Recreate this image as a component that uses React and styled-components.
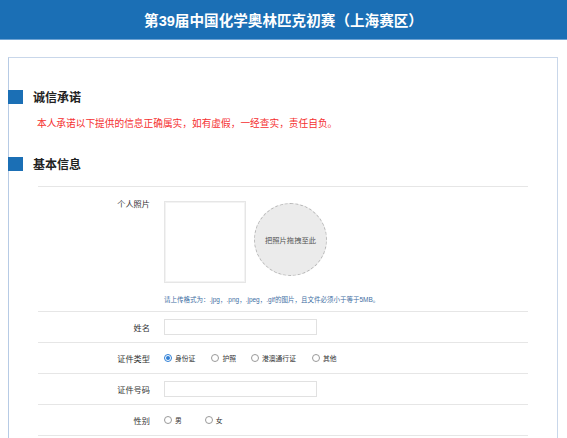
import React from "react"
import styled, { createGlobalStyle } from "styled-components"

const GlobalStyle = createGlobalStyle`
  html, body {
    margin: 0;
    padding: 0;
    background: #fff;
    font-family: "Liberation Sans", "Noto Sans CJK SC", sans-serif;
    color: #333;
  }
`

const Header = styled.header`
  height: 39px;
  background: #1b6fb5;
  border-bottom: 1px solid #6fa3d3;
  display: flex;
  align-items: center;
  justify-content: center;
  color: #fff;
  font-size: 14.6px;
  font-weight: bold;
`

const Panel = styled.div`
  margin: 17px 9px 0 8px;
  border: 1px solid #c9d7ea;
  border-left: 1px solid #b7cbe5;
  border-bottom: none;
  padding-top: 31px;
  min-height: 400px;
`

const SectionTitle = styled.div`
  display: flex;
  align-items: center;
  height: 15px;
  margin-top: ${p => p.top || 0}px;
  font-size: 12px;
  font-weight: bold;
  color: #222;
`

const Square = styled.span`
  width: 15px;
  height: 14px;
  margin-left: -1px;
  background: #1b6fb5;
  margin-right: 10px;
`

const Promise = styled.div`
  margin: 13px 0 0 28px;
  font-size: 9.7px;
  line-height: 14px;
  color: #f53030;
`

const Form = styled.div`
  margin: 15px 0 0 29px;
  width: 490px;
  border-top: 1px solid #e6e6e6;
`

const Row = styled.div`
  display: grid;
  grid-template-columns: 112px 1fr;
  column-gap: 14px;
  align-items: ${p => (p.top ? "start" : "center")};
  min-height: 31px;
  padding: ${p => (p.top ? "14px 0 7px" : "0")};
  border-bottom: 1px solid #e6e6e6;
  box-sizing: border-box;
`

const Label = styled.div`
  text-align: right;
  font-size: 8.2px;
  color: #333;
  margin-top: ${p => (p.top ? "-4px" : "0")};
`

const PhotoWrap = styled.div`
  display: flex;
  align-items: flex-start;
`

const PhotoBox = styled.div`
  width: 80px;
  height: 80px;
  border: 1px solid #e6e6e6;
  box-shadow: inset 0 0 0 1px #f3f3f3;
`

const DropCircle = styled.div`
  width: 71px;
  height: 71px;
  margin: 2px 0 0 8px;
  border-radius: 50%;
  border: 1px dashed #b8b8b8;
  background: #ebebeb;
  display: flex;
  align-items: center;
  justify-content: center;
  font-size: 7.3px;
  color: #555;
`

const Hint = styled.div`
  margin-top: 11px;
  font-size: 6.5px;
  color: #3f6fa4;
`

const TextInput = styled.div`
  width: 151px;
  height: 14px;
  border: 1px solid #e1e1e1;
  background: #fff;
`

const RadioGroup = styled.div`
  display: flex;
  align-items: center;
`

const RadioItem = styled.label`
  display: flex;
  align-items: center;
  margin-right: ${p => p.gap}px;
  font-size: 6.8px;
  color: #333;
`

const Dot = styled.span`
  width: 6px;
  height: 6px;
  border-radius: 50%;
  border: 1px solid ${p => (p.on ? "#2f7fd6" : "#9a9a9a")};
  margin-right: 3px;
  display: flex;
  align-items: center;
  justify-content: center;
  box-sizing: content-box;
  &::after {
    content: "";
    width: 4px;
    height: 4px;
    border-radius: 50%;
    background: ${p => (p.on ? "#2f7fd6" : "transparent")};
  }
`

const Radio = ({ on, gap, children }) => (
  <RadioItem gap={gap}>
    <Dot on={on} />
    {children}
  </RadioItem>
)

export default function App() {
  return (
    <>
      <GlobalStyle />
      <Header>第39届中国化学奥林匹克初赛（上海赛区）</Header>
      <Panel>
        <SectionTitle>
          <Square />
          诚信承诺
        </SectionTitle>
        <Promise>本人承诺以下提供的信息正确属实，如有虚假，一经查实，责任自负。</Promise>
        <SectionTitle top={25}>
          <Square />
          基本信息
        </SectionTitle>
        <Form>
          <Row top>
            <Label top>个人照片</Label>
            <div>
              <PhotoWrap>
                <PhotoBox />
                <DropCircle>把照片拖拽至此</DropCircle>
              </PhotoWrap>
              <Hint>请上传格式为：.jpg，.png，.jpeg，.gif的图片，且文件必须小于等于5MB。</Hint>
            </div>
          </Row>
          <Row>
            <Label>姓名</Label>
            <TextInput />
          </Row>
          <Row>
            <Label>证件类型</Label>
            <RadioGroup>
              <Radio on gap={16}>身份证</Radio>
              <Radio gap={15}>护照</Radio>
              <Radio gap={16}>港澳通行证</Radio>
              <Radio gap={0}>其他</Radio>
            </RadioGroup>
          </Row>
          <Row>
            <Label>证件号码</Label>
            <TextInput />
          </Row>
          <Row>
            <Label>性别</Label>
            <RadioGroup>
              <Radio gap={23}>男</Radio>
              <Radio gap={0}>女</Radio>
            </RadioGroup>
          </Row>
        </Form>
      </Panel>
    </>
  )
}
